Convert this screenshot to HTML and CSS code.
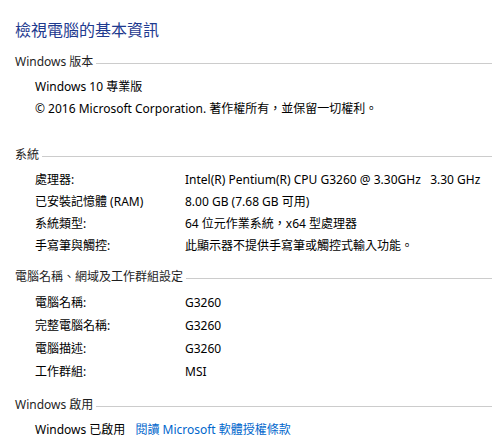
FILE: index.html
```html
<!DOCTYPE html>
<html lang="zh-Hant">
<head>
<meta charset="utf-8">
<title>系統</title>
<link rel="stylesheet" href="styles.css">
</head>
<body>
<div class="page">
  <h1 class="title">檢視電腦的基本資訊</h1>

  <section class="sec sec-first">
    <h2 class="sec-head">Windows 版本</h2>
    <div class="plain">Windows 10 專業版</div>
    <div class="plain">© 2016 Microsoft Corporation. 著作權所有，並保留一切權利。</div>
  </section>

  <section class="sec sec-system">
    <h2 class="sec-head">系統</h2>
    <div class="row"><span class="lbl">處理器:</span><span class="val">Intel(R) Pentium(R) CPU G3260 @ 3.30GHz&nbsp;&nbsp; 3.30 GHz</span></div>
    <div class="row"><span class="lbl">已安裝記憶體 (RAM)</span><span class="val">8.00 GB (7.68 GB 可用)</span></div>
    <div class="row"><span class="lbl">系統類型:</span><span class="val">64 位元作業系統，x64 型處理器</span></div>
    <div class="row"><span class="lbl">手寫筆與觸控:</span><span class="val">此顯示器不提供手寫筆或觸控式輸入功能。</span></div>
  </section>

  <section class="sec sec-name">
    <h2 class="sec-head">電腦名稱、網域及工作群組設定</h2>
    <div class="row row-tall"><span class="lbl">電腦名稱:</span><span class="val">G3260</span></div>
    <div class="row row-tall"><span class="lbl">完整電腦名稱:</span><span class="val">G3260</span></div>
    <div class="row row-tall"><span class="lbl">電腦描述:</span><span class="val">G3260</span></div>
    <div class="row row-tall"><span class="lbl">工作群組:</span><span class="val">MSI</span></div>
  </section>

  <section class="sec sec-act">
    <h2 class="sec-head">Windows 啟用</h2>
    <div class="plain">Windows 已啟用<a class="link" href="#">閱讀 Microsoft 軟體授權條款</a></div>
  </section>
</div>
</body>
</html>
```

FILE: styles.css
```css
html, body {
  margin: 0;
  padding: 0;
  background: #ffffff;
}

body {
  font-family: "Noto Sans", "Noto Sans CJK TC", sans-serif;
  font-size: 12px;
  color: #000000;
  overflow: hidden;
}

.page {
  padding: 20px 0 0 15px;
}

.title {
  margin: 0;
  font-size: 16px;
  line-height: 20px;
  font-weight: normal;
  color: #1e3a8f;
}

.sec-head {
  display: flex;
  align-items: center;
  margin: 0 0 4px 0;
  font-size: 12px;
  line-height: 20px;
  font-weight: normal;
  color: #1e1e1e;
}

.sec-head::after {
  content: "";
  flex: 1;
  height: 1px;
  margin-left: 3px;
  margin-top: 2px;
  background: #cccccc;
}

.sec-first { margin-top: 12px; }
.sec-system { margin-top: 25px; }
.sec-name { margin-top: 10px; }
.sec-act { margin-top: 12px; }

.plain,
.row {
  padding-left: 20px;
  line-height: 22px;
  height: 22px;
  white-space: nowrap;
}

.row {
  display: flex;
}

.row-tall {
  line-height: 23px;
  height: 23px;
}

.lbl {
  width: 150px;
  flex: none;
}

.link {
  margin-left: 10px;
  color: #0066cc;
  text-decoration: none;
}
```
